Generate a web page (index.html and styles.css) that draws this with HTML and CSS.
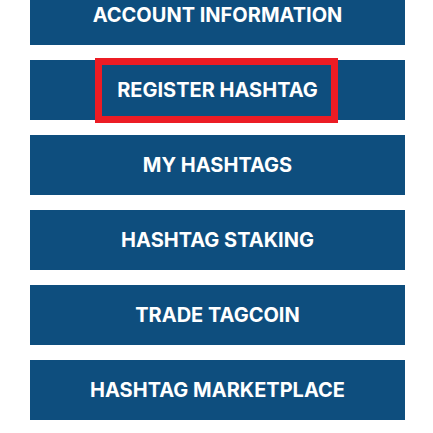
FILE: index.html
```html
<!DOCTYPE html>
<html>
<head>
<meta charset="utf-8">
<link rel="stylesheet" href="styles.css">
</head>
<body>
<nav class="menu">
  <a class="btn">ACCOUNT INFORMATION</a>
  <a class="btn highlighted"><span class="mark"></span>REGISTER HASHTAG</a>
  <a class="btn">MY HASHTAGS</a>
  <a class="btn">HASHTAG STAKING</a>
  <a class="btn">TRADE TAGCOIN</a>
  <a class="btn">HASHTAG MARKETPLACE</a>
</nav>
</body>
</html>
```

FILE: styles.css
```css
html, body {
  margin: 0;
  padding: 0;
  background: #ffffff;
}
body {
  width: 433px;
  height: 433px;
  overflow: hidden;
  font-family: Inter, Roboto, "Liberation Sans", sans-serif;
}
.menu {
  display: flex;
  flex-direction: column;
  gap: 15px;
  margin-top: -15px;
  padding-left: 30px;
}
.btn {
  position: relative;
  display: flex;
  align-items: center;
  justify-content: center;
  width: 375px;
  height: 60px;
  background: #0e4e7e;
  color: #ffffff;
  font-size: 20px;
  font-weight: 700;
  text-decoration: none;
  letter-spacing: 0;
}
.mark {
  position: absolute;
  left: 65px;
  top: -2px;
  width: 229px;
  height: 51px;
  border: 7px solid #ec1c24;
}
```
